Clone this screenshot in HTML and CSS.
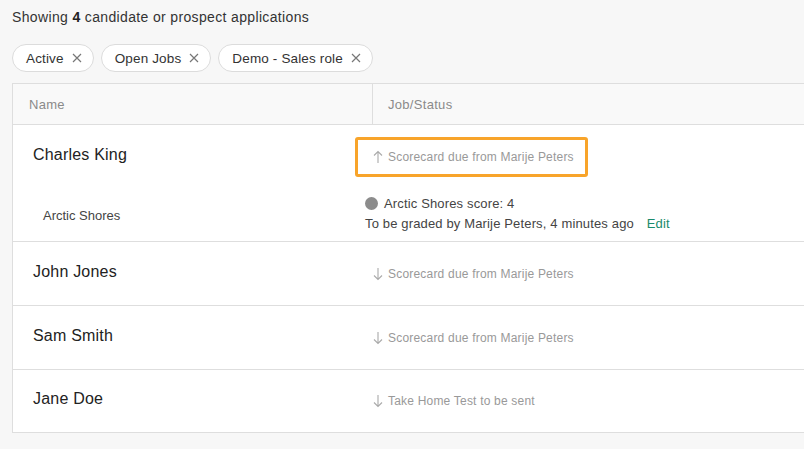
FILE: index.html
```html
<!DOCTYPE html>
<html>
<head>
<meta charset="utf-8">
<link rel="stylesheet" href="styles.css">
</head>
<body>
<div class="page">
  <p class="summary">Showing <b>4</b> candidate or prospect applications</p>
  <div class="chips">
    <span class="chip">Active <svg class="x" viewBox="0 0 10 10" width="10" height="10"><path d="M1 1L9 9M9 1L1 9" stroke="#777" stroke-width="1.2"/></svg></span>
    <span class="chip">Open Jobs <svg class="x" viewBox="0 0 10 10" width="10" height="10"><path d="M1 1L9 9M9 1L1 9" stroke="#777" stroke-width="1.2"/></svg></span>
    <span class="chip">Demo - Sales role <svg class="x" viewBox="0 0 10 10" width="10" height="10"><path d="M1 1L9 9M9 1L1 9" stroke="#777" stroke-width="1.2"/></svg></span>
  </div>
  <div class="table">
    <div class="thead">
      <div class="th th-name">Name</div>
      <div class="th th-status">Job/Status</div>
    </div>
    <div class="row row-first">
      <div class="name">Charles King</div>
      <div class="status-cell">
        <div class="highlight"><span class="status"><svg class="arr" viewBox="0 0 10 14" width="10" height="14"><path d="M5 13V1.5M1 5.5L5 1.5 9 5.5" fill="none" stroke="#aaa" stroke-width="1.1"/></svg>Scorecard due from Marije Peters</span></div>
      </div>
      <div class="sub-name">Arctic Shores</div>
      <div class="score">
        <div class="score-line"><span class="dot"></span>Arctic Shores score: 4</div>
        <div class="grade-line">To be graded by Marije Peters, 4 minutes ago <a class="edit">Edit</a></div>
      </div>
    </div>
    <div class="row">
      <div class="name">John Jones</div>
      <div class="status-cell plain"><span class="status"><svg class="arr" viewBox="0 0 10 14" width="10" height="14"><path d="M5 1V12.5M1 8.5L5 12.5 9 8.5" fill="none" stroke="#aaa" stroke-width="1.1"/></svg>Scorecard due from Marije Peters</span></div>
    </div>
    <div class="row">
      <div class="name">Sam Smith</div>
      <div class="status-cell plain"><span class="status"><svg class="arr" viewBox="0 0 10 14" width="10" height="14"><path d="M5 1V12.5M1 8.5L5 12.5 9 8.5" fill="none" stroke="#aaa" stroke-width="1.1"/></svg>Scorecard due from Marije Peters</span></div>
    </div>
    <div class="row">
      <div class="name">Jane Doe</div>
      <div class="status-cell plain"><span class="status"><svg class="arr" viewBox="0 0 10 14" width="10" height="14"><path d="M5 1V12.5M1 8.5L5 12.5 9 8.5" fill="none" stroke="#aaa" stroke-width="1.1"/></svg>Take Home Test to be sent</span></div>
    </div>
  </div>
</div>
</body>
</html>
```
FILE: styles.css
```css
html, body {
  margin: 0;
  padding: 0;
  background: #f7f7f7;
  overflow: hidden;
}
body {
  font-family: "Liberation Sans", Arial, sans-serif;
  color: #333;
}
.page {
  padding: 0 0 0 12px;
  width: 820px;
}
.summary {
  margin: 0;
  padding-top: 8px;
  height: 20px;
  line-height: 18px;
  font-size: 14px;
  letter-spacing: 0.35px;
  color: #333;
}
.summary b {
  font-weight: bold;
  color: #222;
}
.chips {
  display: flex;
  gap: 7px;
  margin-top: 16px;
}
.chip {
  display: inline-flex;
  align-items: center;
  height: 26px;
  padding: 0 11px 0 13px;
  border: 1px solid #dcdcdc;
  border-radius: 15px;
  background: #fff;
  font-size: 13.5px;
  letter-spacing: 0.15px;
  color: #333;
}
.chip .x {
  margin-left: 8px;
}
.table {
  margin-top: 11px;
  border: 1px solid #dedede;
  border-right: none;
  background: #fff;
  width: 808px;
}
.thead {
  display: grid;
  grid-template-columns: 359px 1fr;
  height: 40px;
  background: #f9f9f9;
  border-bottom: 1px solid #dedede;
}
.th {
  display: flex;
  align-items: center;
  font-size: 13px;
  letter-spacing: 0.3px;
  color: #8a8a8a;
  padding-left: 16px;
}
.th-status {
  border-left: 1px solid #dedede;
  padding-left: 15px;
}
.row {
  display: grid;
  grid-template-columns: 352px 1fr;
  height: 63px;
  align-items: center;
  border-bottom: 1px solid #dedede;
}
.row:last-child {
  border-bottom: none;
  height: 62px;
}
.row-first {
  height: auto;
  grid-template-rows: 40px auto;
  padding: 12px 0 8px;
  row-gap: 17px;
}
.name {
  padding-left: 20px;
  font-size: 16px;
  letter-spacing: 0.2px;
  color: #222;
  padding-bottom: 4px;
}
.plain {
  padding-left: 8px;
  padding-top: 4px;
}
.highlight {
  box-sizing: border-box;
  margin-left: -10px;
  width: 233px;
  height: 40px;
  border: 3px solid #f8a42a;
  border-radius: 3px;
  display: flex;
  align-items: center;
  padding-left: 15px;
}
.status {
  display: inline-flex;
  align-items: center;
  font-size: 12px;
  letter-spacing: 0.2px;
  color: #999;
}
.arr {
  margin-right: 5px;
}
.sub-name {
  padding-left: 30px;
  font-size: 13px;
  color: #444;
  align-self: center;
  padding-top: 4px;
}
.score {
  font-size: 13px;
  letter-spacing: 0.15px;
  color: #444;
}
.score-line {
  display: flex;
  align-items: center;
  height: 18px;
}
.dot {
  width: 13px;
  height: 13px;
  border-radius: 50%;
  background: #8c8c8c;
  margin-right: 6px;
}
.grade-line {
  margin-top: 3px;
  height: 18px;
  line-height: 18px;
}
.edit {
  color: #1a8a6c;
  margin-left: 9px;
}
```
